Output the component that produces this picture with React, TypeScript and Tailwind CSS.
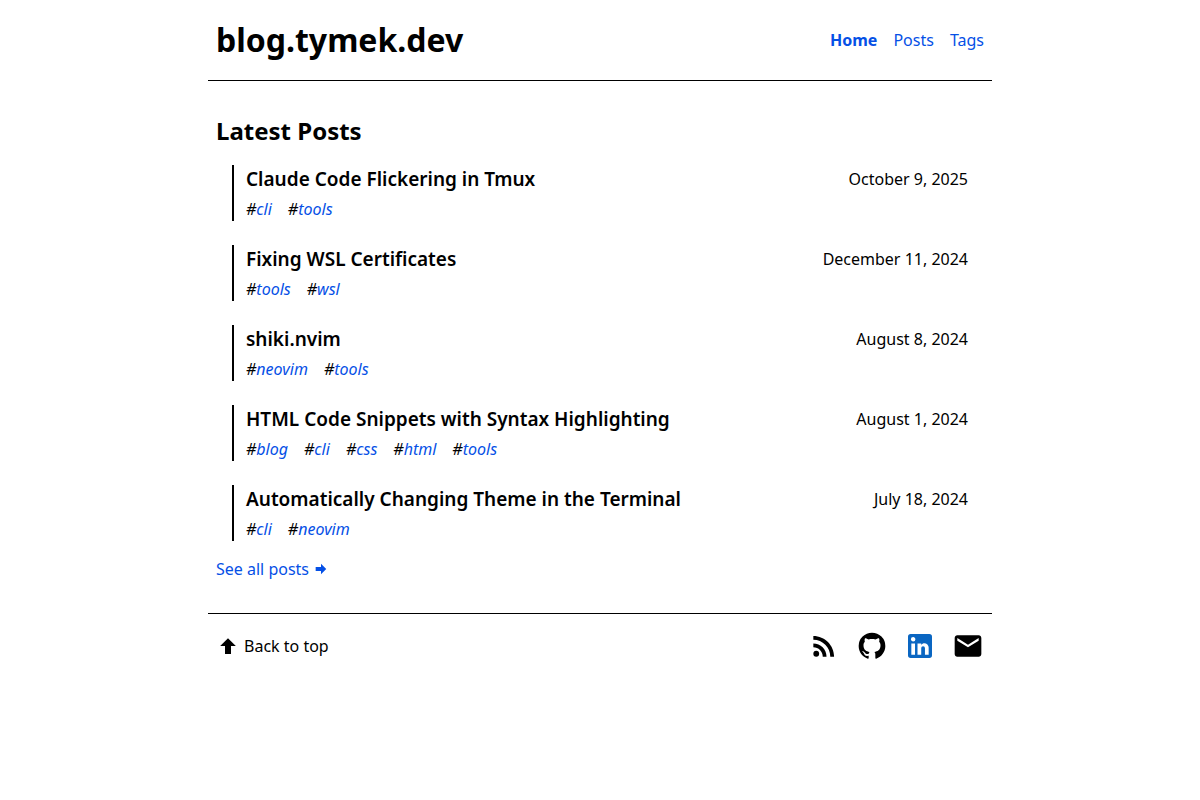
import React from 'react';
import { MdEmail, MdRssFeed } from 'react-icons/md';

type Post = {
  title: string;
  date: string;
  tags: string[];
};

const posts: Post[] = [
  { title: 'Claude Code Flickering in Tmux', date: 'October 9, 2025', tags: ['cli', 'tools'] },
  { title: 'Fixing WSL Certificates', date: 'December 11, 2024', tags: ['tools', 'wsl'] },
  { title: 'shiki.nvim', date: 'August 8, 2024', tags: ['neovim', 'tools'] },
  {
    title: 'HTML Code Snippets with Syntax Highlighting',
    date: 'August 1, 2024',
    tags: ['blog', 'cli', 'css', 'html', 'tools'],
  },
  { title: 'Automatically Changing Theme in the Terminal', date: 'July 18, 2024', tags: ['cli', 'neovim'] },
];

// Material Design Icons paths on a 24x24 grid
const icons = {
  arrowUp: 'M15 20H9v-8H4.16L12 4.16 19.84 12H15v8z',
  arrowRight: 'M4 15V9h8V4.16L19.84 12 12 19.84V15H4z',
  github:
    'M12 2A10 10 0 0 0 2 12c0 4.42 2.87 8.17 6.84 9.5.5.08.66-.23.66-.5v-1.69c-2.77.6-3.36-1.34-3.36-1.34-.46-1.16-1.11-1.47-1.11-1.47-.91-.62.07-.6.07-.6 1 .07 1.53 1.03 1.53 1.03.87 1.52 2.34 1.07 2.91.83.09-.65.35-1.09.63-1.34-2.22-.25-4.55-1.11-4.55-4.92 0-1.11.38-2 1.03-2.71-.1-.25-.45-1.29.1-2.64 0 0 .84-.27 2.75 1.02.79-.22 1.65-.33 2.5-.33s1.71.11 2.5.33c1.91-1.29 2.75-1.02 2.75-1.02.55 1.35.2 2.39.1 2.64.65.71 1.03 1.6 1.03 2.71 0 3.82-2.34 4.66-4.57 4.91.36.31.69.92.69 1.85V21c0 .27.16.59.67.5C19.14 20.16 22 16.42 22 12A10 10 0 0 0 12 2z',
  linkedin:
    'M19 3a2 2 0 0 1 2 2v14a2 2 0 0 1-2 2H5a2 2 0 0 1-2-2V5a2 2 0 0 1 2-2h14m-.5 15.5v-5.3a3.26 3.26 0 0 0-3.26-3.26c-.85 0-1.84.52-2.32 1.3v-1.11h-2.79v8.37h2.79v-4.93c0-.77.62-1.4 1.39-1.4a1.4 1.4 0 0 1 1.4 1.4v4.93h2.79M6.88 8.56a1.68 1.68 0 0 0 1.68-1.68c0-.93-.75-1.69-1.68-1.69a1.69 1.69 0 0 0-1.69 1.69c0 .93.76 1.68 1.69 1.68m1.39 9.94v-8.37H5.5v8.37h2.77z',
};

const Icon: React.FC<{ name: keyof typeof icons; className: string }> = ({ name, className }) => (
  <svg viewBox="0 0 24 24" fill="currentColor" className={className} aria-hidden="true">
    <path d={icons[name]} />
  </svg>
);

const PostItem: React.FC<{ post: Post }> = ({ post }) => (
  <li className="border-l-2 border-black pl-3">
    <div className="flex items-center justify-between">
      <h3 className="text-[19px] leading-7 font-semibold">
        <a href="#">{post.title}</a>
      </h3>
      <time className="leading-7">{post.date}</time>
    </div>
    <ul className="mt-1 flex gap-4 italic">
      {post.tags.map(tag => (
        <li key={tag}>
          #<a href="#" className="text-[#0550e6]">{tag}</a>
        </li>
      ))}
    </ul>
  </li>
);

export default function App() {
  return (
    <div className="mx-auto max-w-[784px] bg-white font-['Noto_Sans',sans-serif] text-base text-black">
      <header className="flex h-[81px] items-center justify-between border-b border-black px-2">
        <a href="#" className="text-[32px] font-bold">blog.tymek.dev</a>
        <nav className="flex gap-4 text-[#0550e6]">
          <a href="#" className="font-bold">Home</a>
          <a href="#">Posts</a>
          <a href="#">Tags</a>
        </nav>
      </header>
      <main className="px-2 py-8">
        <h2 className="text-2xl leading-9 font-bold">Latest Posts</h2>
        <ul className="mt-4 flex flex-col gap-6 px-4">
          {posts.map(post => (
            <PostItem key={post.title} post={post} />
          ))}
        </ul>
        <a href="#" className="mt-4 inline-flex items-center gap-1 text-[#0550e6]">
          See all posts
          <Icon name="arrowRight" className="h-4 w-4" />
        </a>
      </main>
      <footer className="flex h-16 items-center justify-between border-t border-black px-2">
        <a href="#" className="flex items-center gap-1">
          <Icon name="arrowUp" className="h-6 w-6" />
          Back to top
        </a>
        <div className="flex items-center gap-4">
          <a href="#" aria-label="RSS"><MdRssFeed className="h-8 w-8" /></a>
          <a href="#" aria-label="GitHub"><Icon name="github" className="h-8 w-8" /></a>
          <a href="#" aria-label="LinkedIn"><Icon name="linkedin" className="h-8 w-8 text-[#0a66c2]" /></a>
          <a href="#" aria-label="Email"><MdEmail className="h-8 w-8" /></a>
        </div>
      </footer>
    </div>
  );
}
